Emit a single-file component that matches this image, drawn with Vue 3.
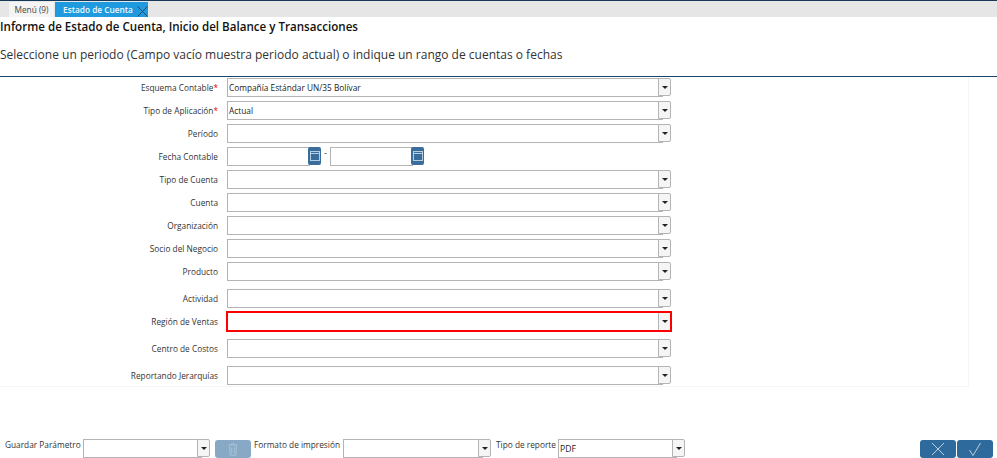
<script setup>
const rows = [
  { label: 'Esquema Contable', req: true, value: 'Compañía Estándar UN/35 Bolívar' },
  { label: 'Tipo de Aplicación', req: true, value: 'Actual' },
  { label: 'Período' },
  { label: 'Fecha Contable', date: true },
  { label: 'Tipo de Cuenta' },
  { label: 'Cuenta' },
  { label: 'Organización' },
  { label: 'Socio del Negocio' },
  { label: 'Producto' },
  { label: 'Actividad', cls: 'gap8' },
  { label: 'Región de Ventas', cls: 'err' },
  { label: 'Centro de Costos', cls: 'gap8' },
  { label: 'Reportando Jerarquías', cls: 'gap8' },
]
</script>

<template>
  <div class="page">
    <div class="tabs">
      <div class="tab">Menú (9)</div>
      <div class="tab active">
        Estado de Cuenta
        <svg class="tabx" width="11" height="11" viewBox="0 0 11 11"><path d="M0.5 0.5l10 10M10.5 0.5l-10 10" stroke="#1f4a63" stroke-width="1" fill="none"/></svg>
      </div>
    </div>
    <h1 class="title">Informe de Estado de Cuenta, Inicio del Balance y Transacciones</h1>
    <p class="desc">Seleccione un periodo (Campo vacío muestra periodo actual) o indique un rango de cuentas o fechas</p>
    <div class="rule"></div>
    <div class="panel">
      <div v-for="r in rows" :key="r.label" class="row" :class="r.cls">
        <div class="label">{{ r.label }}<span v-if="r.req" class="req">*</span></div>
        <div v-if="r.date" class="dates">
          <div class="date">
            <div class="dinput"></div>
            <button class="cal"><svg width="10" height="10" viewBox="0 0 10 10"><rect x="0.5" y="0.5" width="9" height="9" fill="none" stroke="#b5cde1"/><path d="M0.5 2.5h9" stroke="#b5cde1" stroke-width="1"/></svg></button>
          </div>
          <span class="dash">-</span>
          <div class="date">
            <div class="dinput"></div>
            <button class="cal"><svg width="10" height="10" viewBox="0 0 10 10"><rect x="0.5" y="0.5" width="9" height="9" fill="none" stroke="#b5cde1"/><path d="M0.5 2.5h9" stroke="#b5cde1" stroke-width="1"/></svg></button>
          </div>
        </div>
        <div v-else class="combo wide">
          <div class="cinput">{{ r.value }}</div>
          <div class="cbtn"><i class="caret"></i></div>
        </div>
      </div>
    </div>
    <div class="footer">
      <span class="flabel l1">Guardar Parámetro</span>
      <div class="combo f1"><div class="cinput"></div><div class="cbtn"><i class="caret"></i></div></div>
      <button class="trash">
        <svg width="10" height="13" viewBox="0 0 10 13"><path d="M0.5 2h9M3.5 2V0.8h3V2M1.5 2.5l.6 9.8h5.8l.6-9.8M3.7 4.5v6M6.3 4.5v6" stroke="#a9c2d6" fill="none"/></svg>
      </button>
      <span class="flabel l2">Formato de impresión</span>
      <div class="combo f2"><div class="cinput"></div><div class="cbtn"><i class="caret"></i></div></div>
      <span class="flabel l3">Tipo de reporte</span>
      <div class="combo f3"><div class="cinput pdf">PDF</div><div class="cbtn"><i class="caret"></i></div></div>
      <div class="actions">
        <button class="act"><svg width="14" height="14" viewBox="0 0 14 14"><path d="M1 1l12 12M13 1L1 13" stroke="#b9d0e2" fill="none"/></svg></button>
        <button class="act"><svg width="14" height="14" viewBox="0 0 14 14"><path d="M1.5 8l3.5 5.5L12.5 1" stroke="#b9d0e2" fill="none"/></svg></button>
      </div>
    </div>
  </div>
</template>

<style scoped>
.page {
  width: 997px;
  height: 458px;
  overflow: hidden;
  display: flex;
  flex-direction: column;
  font-family: "Open Sans", sans-serif;
  color: #333;
  background: #fff;
}
.tabs {
  flex: none;
  box-sizing: border-box;
  height: 17px;
  border-top: 1px solid #16395a;
  padding-top: 1px;
  padding-left: 9px;
  background: #e6e6e6;
  display: flex;
}
.tab {
  width: 45px;
  margin-right: 1px;
  background: #f4f4f4;
  font-size: 8.3px;
  line-height: 15px;
  text-align: center;
  color: #444;
}
.tab.active {
  width: 93px;
  background: #1f9ade;
  color: #eef7fc;
  font-weight: 600;
  text-align: left;
  padding-left: 8px;
  box-sizing: border-box;
  position: relative;
}
.tabx { position: absolute; right: 0; top: 4px; }
.title {
  margin: 1px 0 0 0;
  font-size: 11.6px;
  line-height: 18px;
  font-weight: 600;
  color: #111;
}
.desc {
  margin: 10px 0 0 0;
  font-size: 12px;
  line-height: 18px;
  color: #333;
}
.rule {
  margin-top: 12px;
  height: 1px;
  flex: none;
  background: #14476e;
}
.panel {
  width: 969px;
  height: 310px;
  box-sizing: border-box;
  flex: none;
  padding-top: 1px;
  border-right: 1px solid #f6f6f6;
  border-bottom: 1px solid #f6f6f6;
}
.row {
  display: grid;
  grid-template-columns: 218px 444px;
  column-gap: 9px;
  align-items: center;
  height: 19px;
  margin-bottom: 4px;
}
.row.gap8 { margin-top: 8px; }
.label {
  text-align: right;
  font-size: 8.3px;
  line-height: 12px;
  color: #333;
}
.req { color: #e00; }
.combo {
  display: flex;
  height: 19px;
  position: relative;
}
.cinput {
  flex: 1;
  min-width: 0;
  border: 1px solid #b4b4b4;
  background: #fff;
  box-sizing: border-box;
  font-size: 8.3px;
  line-height: 17px;
  padding-left: 1px;
  color: #222;
}
.cbtn {
  width: 13px;
  margin-left: -5px;
  flex: none;
  position: relative;
  box-sizing: border-box;
  border: 1px solid #b4b4b4;
  border-radius: 0 2px 2px 0;
  background: #f5f5f5;
  height: 18px;
  display: flex;
  align-items: center;
  justify-content: center;
}
.caret {
  width: 0;
  height: 0;
  border-left: 3px solid transparent;
  border-right: 3px solid transparent;
  border-top: 3px solid #222;
}
.err .combo {
  box-sizing: border-box;
  height: 21px;
  margin: -1px;
  border: 2px solid #f00;
}
.err .cinput { border: none; }
.err .cbtn {
  width: 12px;
  height: 17px;
  margin-left: 0;
  border-width: 0 0 0 1px;
  border-radius: 0;
}
.dates {
  display: flex;
  align-items: flex-start;
}
.date { display: flex; height: 19px; }
.dinput {
  width: 83px;
  height: 19px;
  box-sizing: border-box;
  border: 1px solid #b4b4b4;
  background: #fff;
}
.cal {
  width: 13px;
  height: 18px;
  margin-left: -2px;
  position: relative;
  padding: 0;
  border: none;
  border-radius: 2px;
  background: #3a6d9c;
  display: flex;
  align-items: center;
  justify-content: center;
}
.dash {
  width: 9px;
  text-align: center;
  font-size: 9px;
  line-height: 12px;
}
.footer {
  flex: none;
  display: flex;
  align-items: flex-start;
  height: 20px;
  margin-top: 52px;
  padding-left: 5px;
}
.flabel {
  font-size: 8.3px;
  line-height: 12px;
  color: #333;
  white-space: nowrap;
}
.l1 { width: 78px; }
.l2 { width: 89px; margin-left: 3px; }
.l3 { width: 62px; margin-left: 5px; }
.f1 { width: 127px; }
.f2 { width: 148px; }
.f3 { width: 127px; }
.pdf { font-size: 8.6px; line-height: 19px; padding-left: 1px; }
.trash {
  width: 36px;
  height: 18px;
  margin: 1px 0 0 5px;
  padding: 0;
  border: none;
  border-radius: 3px;
  background: #87a9c5;
  display: flex;
  align-items: center;
  justify-content: center;
}
.actions {
  display: flex;
  gap: 1px;
  margin: 1px 4px 0 auto;
}
.act {
  width: 36px;
  height: 18px;
  padding: 0;
  border: none;
  border-radius: 3px;
  background: #2f6a9c;
  display: flex;
  align-items: center;
  justify-content: center;
}
</style>
